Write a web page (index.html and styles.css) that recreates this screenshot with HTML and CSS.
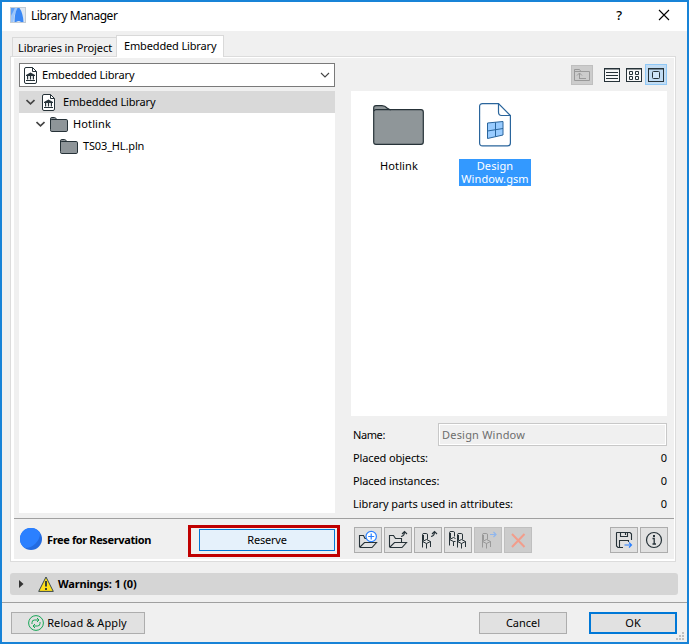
FILE: index.html
```html
<!DOCTYPE html>
<html lang="en">
<head>
<meta charset="utf-8">
<title>Library Manager</title>
<link rel="stylesheet" href="styles.css">
</head>
<body>
<svg class="defs" width="0" height="0">
  <symbol id="folder" viewBox="0 0 18 15"><path d="M.5 12.5V1.8Q.5.5 1.8.5H4.5Q5.5.5 6 1.5L7 2.5H16.2Q17.5 2.5 17.5 3.8V13.2Q17.5 14.5 16.2 14.5H1.8Q.5 14.5.5 13.2Z" fill="#8e9599" stroke="#263238"/><path d="M.5 3Q1 2.5 2 2.5H8" fill="none" stroke="#263238"/></symbol>
  <symbol id="libdoc" viewBox="0 0 13 17"><path d="M2 .5H8.500L12.500 4.500V15Q12.500 16.500 11 16.500H2Q.5 16.500.5 15V2Q.5.5 2 .5Z" fill="#fff" stroke="#263238"/><path d="M8.500 .5V4.500H12.500" fill="none" stroke="#263238"/><path d="M2 8L6.500 5.500L11 8V9H2ZM3 9H4.200V12.500H3ZM5.900 9H7.100V12.500H5.900ZM8.800 9H10V12.500H8.800ZM2 13H11V14H2Z" fill="#263238"/></symbol>
  <symbol id="chair" viewBox="0 0 12 18"><path d="M2.500 16.500V3.500Q2.500 2.500 4 2.500H6.500Q7.500 2.500 7.500 4V8.500M3.500 4V9.500M2.500 10.500L6.500 8.500L10.500 10.500L6.500 12.500ZM6.500 12.500V17.500M10.500 10.500V16" fill="none" stroke="currentColor"/></symbol>
</svg>
<div class="window">
  <header class="titlebar">
    <svg class="app-icon" width="16" height="16" viewBox="0 0 16 16"><rect x=".5" y=".5" width="15" height="15" fill="#dfe8f2" stroke="#c4ccd4"/><path d="M1 15V9Q2 4 5 1H8Q4 7 3.500 15Z" fill="#9cc6fb"/><path d="M1 1H5L1 9Z" fill="#5b9ff7"/><path d="M4.500 15Q4.500 6 7.500 1H9.500Q13 6 13.500 15H11Q9 13 6 15Z" fill="#3a88f5"/></svg>
    <span class="title">Library Manager</span>
    <span class="help">?</span>
    <svg class="close" width="12" height="12" viewBox="0 0 12 12"><path d="M1 1L11 11M11 1L1 11" stroke="#000" stroke-width="1.100"/></svg>
  </header>
  <main class="body">
    <nav class="tabs">
      <div class="tab"><span>Libraries in Project</span></div>
      <div class="tab active"><span class="emb">Embedded Library</span></div>
    </nav>
    <section class="panel"><div class="panel-in">
      <div class="columns">
        <div class="left">
          <div class="combo"><svg width="13" height="17"><use href="#libdoc"/></svg><span class="emb">Embedded Library</span><svg class="chev" width="10" height="6" viewBox="0 0 10 6"><path d="M1 1L5 5L9 1" fill="none" stroke="#444" stroke-width="1.100"/></svg></div>
          <div class="tree">
            <div class="row selected"><svg width="9" height="6" viewBox="0 0 9 6"><path d="M.5 1L4.500 4.800L8.500 1" fill="none" stroke="#444" stroke-width="1.700"/></svg><svg class="doc" width="13" height="17"><use href="#libdoc"/></svg><span class="emb">Embedded Library</span></div>
            <div class="row l2"><svg width="9" height="6" viewBox="0 0 9 6"><path d="M.5 1L4.500 4.800L8.500 1" fill="none" stroke="#444" stroke-width="1.700"/></svg><svg class="fold" width="18" height="15"><use href="#folder"/></svg><span class="hot">Hotlink</span></div>
            <div class="row l3"><svg class="fold" width="18" height="15"><use href="#folder"/></svg><span class="pln">TS03_HL.pln</span></div>
          </div>
        </div>
        <div class="right">
          <div class="views">
            <div class="up"><svg width="16" height="14" viewBox="0 0 16 14"><path d="M.5 12.500V1.500H5.500L7 3.500H15.500V12.500ZM.5 3.500H7M5.500 10.500V5M3 7.500L5.500 5L8 7.500M5 10.500H12" fill="none" stroke="#999"/></svg></div>
            <svg class="v1" width="16" height="14" viewBox="0 0 16 14"><rect x=".5" y=".5" width="15" height="13" fill="#f8f8f8" stroke="#263238"/><path d="M0 1H16M2 4.500H14M2 7.500H14M2 10.500H14" stroke="#263238"/></svg>
            <svg class="v2" width="16" height="14" viewBox="0 0 16 14"><rect x=".5" y=".5" width="15" height="13" fill="#f8f8f8" stroke="#263238"/><path d="M0 1H16M3.500 3.500h3v3h-3zM9.500 3.500h3v3h-3zM3.500 8.500h3v3h-3zM9.500 8.500h3v3h-3z" fill="none" stroke="#263238"/></svg>
            <div class="von"><svg width="16" height="14" viewBox="0 0 16 14"><rect x=".5" y=".5" width="15" height="13" fill="#c2dcf3" stroke="#263238"/><path d="M0 1H16" stroke="#263238"/><rect x="4.500" y="3.500" width="7" height="7" rx="1" fill="#cfe5f8" stroke="#263238"/></svg></div>
          </div>
          <div class="files">
            <div class="file"><svg width="52" height="40" viewBox="0 0 52 40"><path d="M.7 37V3Q.7.7 3 .7H9Q12 .7 14 3L17 4.700H48Q50.300 4.700 50.300 7V37Q50.300 39.300 48 39.300H3Q.7 39.300.7 37Z" fill="#8f9699" stroke="#263238" stroke-width="1.200"/><path d="M1 6Q1.500 4.700 3 4.700H18" fill="none" stroke="#263238" stroke-width="1.200"/></svg><span class="lab hot">Hotlink</span></div>
            <div class="file"><svg width="32" height="44" viewBox="0 0 32 44"><path d="M3.500 .6H19.500L31.400 12.500V40Q31.400 42.900 28.500 42.900H3.500Q.6 42.900.6 40V3.500Q.6.6 3.500 .6Z" fill="#fff" stroke="#2a659c" stroke-width="1.200"/><path d="M19.500.6V9Q19.500 12.500 22.500 12.500H31.400" fill="none" stroke="#2a659c" stroke-width="1.200"/><path d="M8.500 20L24 18.500V32L8.500 35.500ZM16.500 19.300V33.500M8.500 28L24 25.500" fill="#99ccff" stroke="#2a659c"/></svg><span class="lab sel">Design Window.gsm</span></div>
          </div>
          <div class="info">
            <div class="line name"><span>Name:</span><div class="field">Design Window</div></div>
            <div class="line"><span>Placed objects:</span><b>0</b></div>
            <div class="line"><span>Placed instances:</span><b>0</b></div>
            <div class="line"><span class="long">Library parts used in attributes:</span><b>0</b></div>
          </div>
        </div>
      </div>
      <div class="actions">
        <svg class="ball" width="22" height="22" viewBox="0 0 22 22"><circle cx="11" cy="11" r="11" fill="#236be0"/><path d="M20 4.700A11 11 0 1 0 4.800 20Q11 20 15.500 15.500T20 4.700Z" fill="#2b80ff"/></svg>
        <strong>Free for Reservation</strong>
        <div class="mark"><button class="btn reserve"><span>Reserve</span></button></div>
        <div class="tools">
          <button class="tool"><svg width="20" height="20" viewBox="0 0 20 20"><path d="M1.500 17V5.500H5.500L7 8.500H9M1.500 17.500L6.500 12.500H18.500L14 17.500H1.500" fill="none" stroke="#263238" stroke-width="1.100"/><circle cx="13.200" cy="6.500" r="5.200" fill="#fff" stroke="#2b80ff" stroke-width="1.200"/><path d="M13.200 3.500V9.500M10.200 6.500H16.200" stroke="#2b80ff" stroke-width="1.200"/></svg></button>
          <button class="tool"><svg width="20" height="20" viewBox="0 0 20 20"><path d="M1.500 17V5.500H5.500L7.500 8.500H13.500V12M1.500 17.500L6.500 12.500H18.500L14 17.500H1.500M13 6.500Q16.500 6 16.500 2M14 4L16.500 1.500L19 4" fill="none" stroke="#263238" stroke-width="1.100"/></svg></button>
          <button class="tool"><svg width="20" height="20" viewBox="0 0 20 20"><use href="#chair" x="2" y="1" width="12" height="18"/><path d="M13 6.500Q16.500 6 16.500 2M14 4L16.500 1.500L19 4" fill="none" stroke="#263238" stroke-width="1.100"/></svg></button>
          <button class="tool"><svg width="20" height="20" viewBox="0 0 20 20"><path d="M1.500 15.500V2.500Q1.500 1.500 3 1.500H5.500Q6.500 1.500 6.500 3V6.500M2.500 3V8.500M1.500 9.500L5.500 7.500L7.500 8.500M1.500 9.500L5.500 11.500H7.500M5.500 11.500V16" fill="none" stroke="#263238"/><use href="#chair" x="7" y="1" width="12" height="18"/></svg></button>
          <button class="tool off"><svg width="20" height="20" viewBox="0 0 20 20"><use href="#chair" x="2" y="1" width="12" height="18"/><path d="M12 4.500H18M15.500 2L18 4.500L15.500 7" fill="none" stroke="#8fb6ee" stroke-width="1.200"/></svg></button>
          <button class="tool off"><svg width="20" height="20" viewBox="0 0 20 20"><path d="M4 4L16.500 17M16.500 4L4 17" stroke="#f29d8b" stroke-width="2"/></svg></button>
        </div>
        <div class="tools end">
          <button class="tool"><svg width="20" height="20" viewBox="0 0 20 20"><path d="M9 17.500H4L2.500 16V3Q2.500 2.500 3 2.500H16L17.500 4V10M6.500 2.500V6.500H13.500V2.500M11.500 3V5M5.500 17V10.500H14.500V12" fill="none" stroke="#263238" stroke-width="1.100"/><path d="M10.500 15H17.500M15 12.500L17.500 15L15 17.500" fill="none" stroke="#2b80ff" stroke-width="1.200"/></svg></button>
          <button class="tool"><svg width="20" height="20" viewBox="0 0 20 20"><circle cx="10" cy="10" r="7.500" fill="none" stroke="#263238" stroke-width="1.200"/><path d="M8.500 8.500H10.200V14M8.500 14H12" fill="none" stroke="#263238" stroke-width="1.300"/><rect x="9" y="5" width="2" height="2" fill="#263238"/></svg></button>
        </div>
      </div>
    </div></section>
    <div class="warnings"><svg width="5" height="8" viewBox="0 0 5 8"><path d="M0 0L4.500 4L0 8Z" fill="#333"/></svg><svg class="tri" width="16" height="16" viewBox="0 0 16 16"><path d="M8 1L15.300 15.400H.7Z" fill="#ffe01a" stroke="#37474f"/><path d="M8 5V10.500M8 12V14" stroke="#263238" stroke-width="1.800"/></svg><strong>Warnings: 1 (0)</strong></div>
  </main>
  <footer class="footer">
    <button class="btn reload"><svg width="16" height="16" viewBox="0 0 16 16"><g fill="none" stroke="#17a556"><circle cx="8" cy="8" r="7.400"/><path d="M4 9V7.500Q4 5 6.500 5H11M9 3L11 5L9 7M12 7V8.500Q12 11 9.500 11H5M7 9L5 11L7 13"/></g></svg><span>Reload &amp; Apply</span></button>
    <button class="btn cancel"><span>Cancel</span></button>
    <button class="btn ok"><span>OK</span></button>
    <svg class="grip" width="8" height="8" viewBox="0 0 8 8"><path d="M6 0h2v2h-2zM6 3h2v2h-2zM6 6h2v2h-2zM3 3h2v2h-2zM3 6h2v2h-2zM0 6h2v2h-2z" fill="#bfbfbf"/></svg>
  </footer>
</div>
</body>
</html>
```
FILE: styles.css
```css
* { box-sizing: border-box; }
body { margin: 0; font: 11px/14px "Noto Sans", "Open Sans", sans-serif; color: #000; overflow: hidden; }
svg { display: block; flex: none; }
span, strong { white-space: nowrap; }
button { font: inherit; color: inherit; padding: 0; margin: 0; }
.defs { position: absolute; }
.window { width: 689px; height: 644px; border: 2px solid #1883d7; background: #f0f0f0; display: flex; flex-direction: column; }
.titlebar { height: 29px; background: #fff; display: flex; align-items: center; padding: 0 17px 3px 8px; }
.title { font-size: 12px; letter-spacing: -0.46px; margin: 2px 0 0 5px; }
.help { margin-left: auto; font-size: 13px; font-weight: 500; margin-right: 36px; }
.body { flex: none; height: 571px; padding: 4px 7px 0 8px; display: flex; flex-direction: column; }
.tabs { display: flex; align-items: flex-end; height: 21px; padding-left: 2px; }
.tab { width: 105px; height: 19px; border: 1px solid #d9d9d9; border-bottom: 0; display: flex; align-items: center; padding: 2px 0 0 5px; letter-spacing: -0.1px; }
.tab.active { width: 108px; height: 22px; margin: 0 0 -1px -1px; background: #fff; padding: 0 0 1px 7px; z-index: 1; }
.emb { letter-spacing: -0.15px; }
.hot { letter-spacing: 0.12px; }
.pln { letter-spacing: -0.15px; }
.panel { width: 666px; height: 506px; border: 1px solid #dcdcdc; background: #fff; padding: 1px 1px 2px 3px; }
.panel-in { background: #f0f0f0; height: 501px; display: flex; flex-direction: column; }
.columns { display: flex; height: 461px; border-bottom: 1px solid #a0a0a0; padding: 5px 7px 0 5px; gap: 16px; }
.left { width: 316px; }
.combo { height: 24px; border: 1px solid #7a7a7a; background: #fff; display: flex; align-items: center; padding-left: 4px; gap: 5px; }
.chev { margin: 0 4px 0 auto; }
.tree { margin-top: 4px; height: 422px; background: #fff; }
.row { height: 22px; display: flex; align-items: center; padding-left: 7px; }
.row.selected { background: #d9d9d9; }
.doc { margin: 0 8px 0 7px; }
.l2 { padding-left: 17px; }
.l3 { padding-left: 41px; }
.fold { margin: 0 5px; }
.l3 .fold { margin-left: 0; }
.right { width: 316px; }
.views { height: 28px; display: flex; justify-content: flex-end; align-items: flex-start; }
.up { width: 22px; height: 20px; margin: 2px 11px 0 0; background: #cccccc; border: 1px solid #bfbfbf; padding: 2px; }
.v1, .v2 { margin: 5px 6px 0 0; }
.v2 { margin-right: 3px; }
.von { width: 22px; height: 21px; margin-top: 1px; background: #c2dcf3; border: 1px solid #90c8f6; padding: 3px 2px; }
.files { height: 325px; background: #fff; display: flex; padding-top: 12px; }
.file { width: 96px; display: flex; flex-direction: column; align-items: center; }
.file svg { height: 44px; }
.lab { margin-top: 12px; text-align: center; line-height: 13px; padding-bottom: 1px; }
.lab.sel { background: #3399ff; color: #fff; width: 72px; white-space: normal; letter-spacing: 0.1px; }
.info { padding: 7px 0 0 2px; }
.line { display: flex; justify-content: space-between; align-items: center; height: 23px; letter-spacing: -0.12px; }
.line .long { letter-spacing: -0.07px; }
.line b { font-weight: 400; letter-spacing: 0; }
.name > span { letter-spacing: -0.4px; }
.field { width: 229px; height: 23px; border: 1px solid #c8c8c8; box-shadow: inset 0 0 0 1px #fff; color: #6d6d6d; padding: 4px 3px; letter-spacing: 0.2px; }
.actions { display: flex; height: 40px; padding-left: 6px; }
.ball { margin-top: 9px; }
.actions strong { margin: 14px 0 0 5px; width: 141px; letter-spacing: -0.37px; }
.mark { width: 152px; height: 32px; margin-top: 6px; border: 3px solid #c00000; padding: 1px 3px 0 8px; }
.btn { height: 22px; border: 1px solid #adadad; background: #e1e1e1; display: flex; align-items: center; justify-content: center; }
.reserve { width: 136px; background: #e5f1fb; border-color: #0078d7; letter-spacing: -0.2px; }
.tools { display: flex; gap: 2px; margin: 8px 0 0 14px; }
.tool { width: 28px; height: 26px; background: #e1e1e1; border: 1px solid #adadad; display: flex; align-items: center; justify-content: center; color: #263238; }
.tool.off { background: #cccccc; border-color: #bfbfbf; color: #999; }
.end { margin-left: auto; padding-right: 6px; }
.warnings { margin-top: 11px; width: 668px; height: 22px; border-radius: 3px; background: #d5d5d5; display: flex; align-items: center; padding-left: 9px; letter-spacing: -0.15px; }
.tri { margin: 0 4px 0 14px; }
.footer { height: 40px; border-top: 1px solid #a0a0a0; display: flex; padding: 9px 0 0 9px; }
.reload { width: 134px; gap: 3px; padding-right: 1px; letter-spacing: 0.1px; }
.cancel { width: 88px; margin-left: 334px; }
.ok { width: 88px; margin-left: 22px; border: 2px solid #0078d7; }
.grip { margin: 20px 0 0 -1px; }
```
